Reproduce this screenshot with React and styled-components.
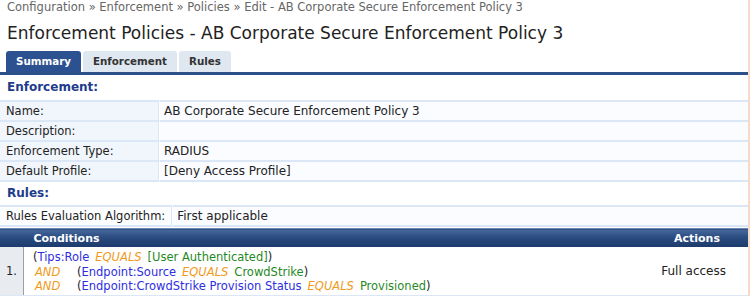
import React from 'react';
import styled, { createGlobalStyle } from 'styled-components';

const GlobalStyle = createGlobalStyle`
  html, body {
    margin: 0;
    padding: 0;
    background: #ffffff;
  }
  body {
    font-family: "DejaVu Sans", Verdana, sans-serif;
    color: #222;
  }
`;

const Page = styled.div`
  width: 748px;
  height: 296px;
  border-right: 2px solid #f6d9c6;
  overflow: hidden;
`;

const Breadcrumb = styled.div`
  padding: 0 7px;
  height: 15px;
  line-height: 15px;
  font-size: 11.5px;
  color: #666;
`;

const Title = styled.h1`
  margin: 0;
  padding: 0 7px;
  height: 36px;
  line-height: 36px;
  font-size: 17px;
  font-weight: normal;
  color: #222;
`;

const TabBar = styled.div`
  display: flex;
  gap: 2px;
  padding-left: 6px;
  height: 21px;
  border-bottom: 3px solid #2c5088;
`;

const Tab = styled.div`
  padding: 0 10px;
  line-height: 21px;
  font-size: 10.3px;
  font-weight: bold;
  border-radius: 3px 3px 0 0;
  background: ${({ active }) => (active ? '#2c5190' : '#dfe7f1')};
  color: ${({ active }) => (active ? '#ffffff' : '#333')};
`;

const SectionTitle = styled.div`
  padding: 0 7px;
  height: ${({ h }) => h}px;
  line-height: ${({ h }) => h}px;
  font-size: 12px;
  font-weight: bold;
  color: #1e3c8c;
`;

const InfoTable = styled.table`
  width: 100%;
  border-collapse: separate;
  border-spacing: 0;
  font-size: 11.5px;
`;

const Label = styled.td`
  width: ${({ w }) => w}px;
  height: 18px;
  padding: 0 6px;
  background: ${({ plain }) => (plain ? '#fcfdff' : '#f1f6fc')};
  border-top: 2px solid #dbe6f7;
  border-right: 1px solid #dbe6f7;
  white-space: nowrap;
  color: #222;
`;

const Value = styled.td`
  height: 18px;
  padding: 0 4px;
  font-size: 12px;
  background: #fbfcff;
  border-top: 2px solid #dbe6f7;
  border-left: 1px solid #ffffff;
  color: #222;
`;

const LastRow = styled.tr`
  td {
    border-bottom: 2px solid #dbe6f7;
  }
`;

const RulesTable = styled.table`
  width: 100%;
  margin-top: 1px;
  border-collapse: collapse;
  font-size: 11.5px;
`;

const HeadCell = styled.th`
  height: 18px;
  padding: 0 ${({ right }) => (right ? 28 : 10)}px 0 10px;
  text-align: ${({ right }) => (right ? 'right' : 'left')};
  font-size: 11px;
  font-weight: bold;
  color: #fff;
  background: linear-gradient(#47699c 0%, #2a4b80 45%, #1c3a6b 100%);
  border-top: 1px solid #6e8bb6;
`;

const NumHead = styled(HeadCell)`
  width: 1px;
  padding: 0;
`;

const NumCell = styled.td`
  width: 10px;
  padding: 0 6px;
  background: #e8ebf0;
  border-right: 1px solid #9aa0a8;
  border-bottom: 2px solid #dbe6f7;
`;

const CondCell = styled.td`
  padding: 3px 0 1px 9px;
  line-height: 14.5px;
  border-bottom: 2px solid #dbe6f7;
`;

const ActionCell = styled.td`
  padding-right: 22px;
  text-align: right;
  font-size: 12px;
  border-bottom: 2px solid #dbe6f7;
`;

const Line = styled.div`
  white-space: nowrap;
`;

const Attr = styled.span`
  color: #2d2ee0;
`;

const Op = styled.span`
  color: #f09a1c;
  font-style: italic;
  margin: 0 6px;
`;

const Val = styled.span`
  color: #1f8a1f;
`;

const Join = styled.span`
  display: inline-block;
  width: 42px;
  padding-left: 2px;
  color: #f09a1c;
  font-style: italic;
`;

const infoRows = [
  ['Name:', 'AB Corporate Secure Enforcement Policy 3'],
  ['Description:', ''],
  ['Enforcement Type:', 'RADIUS'],
  ['Default Profile:', '[Deny Access Profile]'],
];

export default function App() {
  return (
    <Page>
      <GlobalStyle />
      <Breadcrumb>
        Configuration » Enforcement » Policies » Edit - AB Corporate Secure Enforcement Policy 3
      </Breadcrumb>
      <Title>Enforcement Policies - AB Corporate Secure Enforcement Policy 3</Title>
      <TabBar>
        <Tab active>Summary</Tab>
        <Tab>Enforcement</Tab>
        <Tab>Rules</Tab>
      </TabBar>

      <SectionTitle h={25}>Enforcement:</SectionTitle>
      <InfoTable>
        <tbody>
          {infoRows.map(([k, v], i) =>
            i === infoRows.length - 1 ? (
              <LastRow key={k}>
                <Label w={146}>{k}</Label>
                <Value>{v}</Value>
              </LastRow>
            ) : (
              <tr key={k}>
                <Label w={146}>{k}</Label>
                <Value>{v}</Value>
              </tr>
            )
          )}
        </tbody>
      </InfoTable>

      <SectionTitle h={23}>Rules:</SectionTitle>
      <InfoTable>
        <tbody>
          <LastRow>
            <Label w={148} plain>Rules Evaluation Algorithm:</Label>
            <Value>First applicable</Value>
          </LastRow>
        </tbody>
      </InfoTable>

      <RulesTable>
        <thead>
          <tr>
            <NumHead />
            <HeadCell>Conditions</HeadCell>
            <HeadCell right>Actions</HeadCell>
          </tr>
        </thead>
        <tbody>
          <tr>
            <NumCell>1.</NumCell>
            <CondCell>
              <Line>
                (<Attr>Tips:Role</Attr><Op>EQUALS</Op><Val>[User Authenticated]</Val>)
              </Line>
              <Line>
                <Join>AND</Join>(<Attr>Endpoint:Source</Attr><Op>EQUALS</Op><Val>CrowdStrike</Val>)
              </Line>
              <Line>
                <Join>AND</Join>(<Attr>Endpoint:CrowdStrike Provision Status</Attr><Op>EQUALS</Op><Val>Provisioned</Val>)
              </Line>
            </CondCell>
            <ActionCell>Full access</ActionCell>
          </tr>
        </tbody>
      </RulesTable>
    </Page>
  );
}
